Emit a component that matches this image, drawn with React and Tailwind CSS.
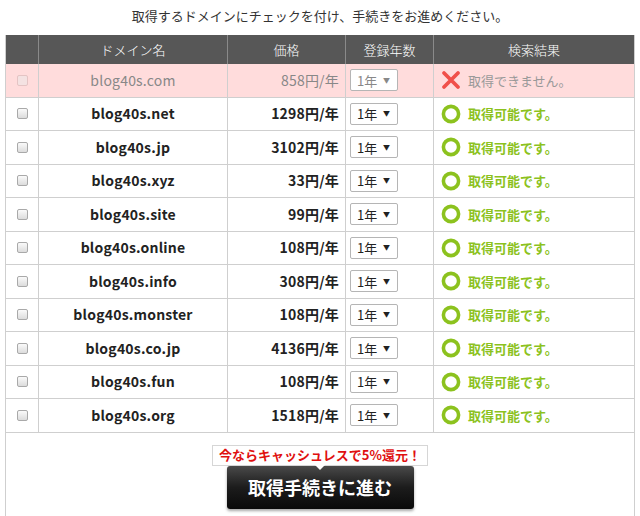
import React from 'react'

const domains = [
  { name: 'blog40s.com', price: 858, ok: false },
  { name: 'blog40s.net', price: 1298, ok: true },
  { name: 'blog40s.jp', price: 3102, ok: true },
  { name: 'blog40s.xyz', price: 33, ok: true },
  { name: 'blog40s.site', price: 99, ok: true },
  { name: 'blog40s.online', price: 108, ok: true },
  { name: 'blog40s.info', price: 308, ok: true },
  { name: 'blog40s.monster', price: 108, ok: true },
  { name: 'blog40s.co.jp', price: 4136, ok: true },
  { name: 'blog40s.fun', price: 108, ok: true },
  { name: 'blog40s.org', price: 1518, ok: true }
]

const font = { fontFamily: '"Noto Sans CJK JP", "Open Sans", sans-serif' }

const Ring = () => (
  <svg width="20" height="20" viewBox="0 0 20 20" className="shrink-0">
    <circle cx="10" cy="10" r="7.6" fill="none" stroke="#8cc21e" strokeWidth="3.6" />
  </svg>
)

const Cross = () => (
  <svg width="20" height="20" viewBox="0 0 20 20" className="shrink-0">
    <path d="M3 3 L17 17 M17 3 L3 17" stroke="#f0504a" strokeWidth="3.8" strokeLinecap="round" />
  </svg>
)

const YearSelect = ({ dim }) => (
  <div className={'flex items-center justify-between w-[48px] h-[22px] border border-[#b5b5b5] rounded-[2px] bg-white pl-[6px] pr-[7px] text-[13px] ' + (dim ? 'text-[#888]' : 'text-[#222]')}>
    <span>1年</span>
    <span className="text-[7px] leading-none">▼</span>
  </div>
)

const Row = ({ d }) => {
  const dim = !d.ok
  return (
    <div className={'grid grid-cols-[33px_189px_118px_88px_1fr] h-[33.5px] border-b border-[#cfcfcf] ' + (dim ? 'bg-[#ffdcdc]' : 'bg-white')}>
      <div className="flex items-center justify-center border-r border-[#cfcfcf]">
        <div className={'w-[11px] h-[11px] rounded-[2px] border ' + (dim ? 'border-[#e4c4c4] bg-[#f4e2e2]' : 'border-[#a9a9a9] bg-gradient-to-b from-[#fafafa] to-[#dcdcdc]')} />
      </div>
      <div className={'flex items-center justify-center border-r border-[#cfcfcf] text-[14px] tracking-[0.2px] ' + (dim ? 'text-[#888]' : 'font-bold text-[#222]')}>
        {d.name}
      </div>
      <div className={'flex items-center justify-end pr-[6px] border-r border-[#cfcfcf] text-[14px] tracking-[0.2px] ' + (dim ? 'text-[#888]' : 'font-bold text-[#222]')}>
        {d.price}円/年
      </div>
      <div className="flex items-center pl-[4px] border-r border-[#cfcfcf]">
        <YearSelect dim={dim} />
      </div>
      <div className="flex items-center gap-[7px] pl-[7px]">
        {d.ok ? <Ring /> : <Cross />}
        <span className={'text-[13px] ' + (d.ok ? 'font-bold text-[#8cc21e]' : 'text-[#999]')}>
          {d.ok ? '取得可能です。' : '取得できません。'}
        </span>
      </div>
    </div>
  )
}

export default function App () {
  return (
    <div className="w-[640px] h-[516px] overflow-hidden bg-white" style={font}>
      <p className="h-[35px] pt-[6px] text-center text-[13px] text-[#333]">
        取得するドメインにチェックを付け、手続きをお進めください。
      </p>
      <div className="ml-[5px] w-[630px] border-l border-r border-[#cfcfcf]">
        <div className="grid grid-cols-[33px_189px_118px_88px_1fr] h-[29px] bg-[#575757] text-white text-[13px] font-light">
          <div className="border-r border-[#8a8a8a]" />
          <div className="flex items-center justify-center border-r border-[#8a8a8a]">ドメイン名</div>
          <div className="flex items-center justify-center border-r border-[#8a8a8a]">価格</div>
          <div className="flex items-center justify-center border-r border-[#8a8a8a]">登録年数</div>
          <div className="flex items-center justify-center">検索結果</div>
        </div>
        {domains.map(d => <Row key={d.name} d={d} />)}
        <div className="flex flex-col items-center pt-[12px] h-[100px]">
          <div className="relative border border-[#d6d6d6] bg-white px-[6px] h-[21px] flex items-center text-[13px] font-bold text-[#e01010] z-10">
            今ならキャッシュレスで5%還元！
            <span className="absolute left-1/2 -translate-x-1/2 -bottom-[5px] w-0 h-0 border-l-[5px] border-r-[5px] border-t-[5px] border-l-transparent border-r-transparent border-t-white" />
          </div>
          <button className="w-[187px] h-[43px] rounded-[3px] bg-gradient-to-b from-[#4a4a4a] via-[#1c1c1c] to-[#0a0a0a] text-white text-[18px] font-bold shadow-[0_2px_3px_rgba(0,0,0,0.35)]">
            取得手続きに進む
          </button>
        </div>
      </div>
    </div>
  )
}
